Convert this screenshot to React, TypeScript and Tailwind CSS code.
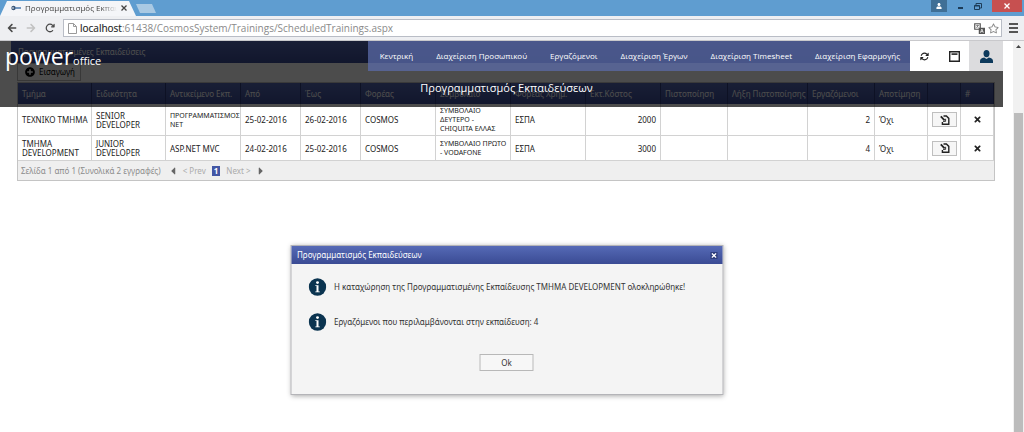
import type { ReactNode } from 'react';
import { FaArrowLeft, FaArrowRight, FaCaretLeft, FaCaretRight, FaPlusCircle, FaRegStar, FaTimes, FaUser } from 'react-icons/fa';
import { FaArrowRotateRight, FaArrowsRotate } from 'react-icons/fa6';

interface Training {
  department: string;
  specialty: string;
  subject: string;
  from: string;
  to: string;
  agency: string;
  contract: string;
  funding: string;
  cost: number;
  employees: number;
}

const menuItems = [
  'Κεντρική',
  'Διαχείριση Προσωπικού',
  'Εργαζόμενοι',
  'Διαχείριση Έργων',
  'Διαχείριση Timesheet',
  'Διαχείριση Εφαρμογής',
];

const columns = [
  { label: 'Τμήμα', width: 'w-[74px]' },
  { label: 'Ειδικότητα', width: 'w-[74px]' },
  { label: 'Αντικείμενο Εκπ.', width: 'w-[75px]' },
  { label: 'Από', width: 'w-[60px]' },
  { label: 'Έως', width: 'w-[60px]' },
  { label: 'Φορέας', width: 'w-[75px]' },
  { label: 'Συμβόλαιο', width: 'w-[75px]' },
  { label: 'Φορέας Χρημ.', width: 'w-[75px]' },
  { label: 'Εκτ.Κόστος', width: 'w-[75px]' },
  { label: 'Πιστοποίηση', width: 'w-[67px]' },
  { label: 'Λήξη Πιστοποίησης', width: 'w-[80px]' },
  { label: 'Εργαζόμενοι', width: 'w-[67px]' },
  { label: 'Αποτίμηση', width: 'w-[53px]' },
  { label: '', width: 'w-[33px]' },
  { label: '#', width: 'w-[33px]' },
];

const trainings: Training[] = [
  {
    department: 'ΤΕΧΝΙΚΟ ΤΜΗΜΑ',
    specialty: 'SENIOR DEVELOPER',
    subject: 'ΠΡΟΓΡΑΜΜΑΤΙΣΜΟΣ NET',
    from: '25-02-2016',
    to: '26-02-2016',
    agency: 'COSMOS',
    contract: 'ΣΥΜΒΟΛΑΙΟ ΔΕΥΤΕΡΟ - CHIQUITA ΕΛΛΑΣ',
    funding: 'ΕΣΠΑ',
    cost: 2000,
    employees: 2,
  },
  {
    department: 'ΤΜΗΜΑ DEVELOPMENT',
    specialty: 'JUNIOR DEVELOPER',
    subject: 'ASP.NET MVC',
    from: '24-02-2016',
    to: '25-02-2016',
    agency: 'COSMOS',
    contract: 'ΣΥΜΒΟΛΑΙΟ ΠΡΩΤΟ - VODAFONE',
    funding: 'ΕΣΠΑ',
    cost: 3000,
    employees: 4,
  },
];

const KeyIcon = () => (
  <svg viewBox="0 0 10 6" className="h-[6px] w-[10px] shrink-0">
    <circle cx="2.5" cy="3" r="2.2" fill="#3d5878" />
    <path d="M4 3h6" stroke="#4d79ad" strokeWidth="1.4" />
    <circle cx="2" cy="3" r=".8" fill="#fff" />
  </svg>
);

const PageIcon = () => (
  <svg viewBox="0 0 9 11" className="h-[11px] w-[9px] shrink-0" fill="#fff" stroke="#9a9a9a">
    <path d="M.5.5h5l3 3v7h-8zM5.5.5v3h3" />
  </svg>
);

const TranslateIcon = () => (
  <svg viewBox="0 0 12 12" className="size-[11px]">
    <path d="M.8.8h6v6h-6z" fill="#fff" stroke="#555" strokeWidth="1.3" />
    <path d="M2.3 2.6h3M3.8 2v.8M2.5 5.2l2.5-2.5M3 3.5l2 1.8" stroke="#555" strokeWidth=".7" />
    <path d="M5.2 5.2H12V12H5.2z" fill="#555" />
    <path d="M7 10.6l1.6-4 1.6 4M7.6 9.4h2" stroke="#fff" strokeWidth=".8" fill="none" />
  </svg>
);

const WindowIcon = () => (
  <svg viewBox="0 0 11 11" className="size-[11px]">
    <path d="M.7.7h9.6v9.6H.7z" fill="#fff" stroke="#222" strokeWidth="1.4" />
    <path d="M2.5 3.1h6" stroke="#222" strokeWidth="1.6" />
  </svg>
);

const UserIcon = () => (
  <svg viewBox="0 0 13 13" className="size-[13px]" fill="#0d3a5c">
    <ellipse cx="6.5" cy="3.6" rx="3" ry="3.6" />
    <path d="M0 13V11c0-2 1.4-3 4.2-3.6L6.5 9l2.3-1.6C11.6 8 13 9 13 11v2z" />
  </svg>
);

const EditIcon = () => (
  <svg viewBox="0 0 10 10" className="size-[10px]" fill="none" stroke="#222">
    <path d="M3.5 1H6.4L8.8 3.4V9.2H2.4V7" strokeWidth="1.4" />
    <path d="M.8 1.400l3.800 4" strokeWidth="1.8" />
    <path d="M5.600 3.800v2.600H3" strokeWidth=".9" />
  </svg>
);

const InfoIcon = () => (
  <svg viewBox="0 0 18 18" className="size-[18px] shrink-0">
    <circle cx="9" cy="9" r="8.7" fill="#0b3450" />
    <circle cx="9" cy="4.6" r="1.4" fill="#fff" />
    <path d="M6.8 7.2H10v6.2h1.3v.9H6.8v-.9H8V8.1H6.8z" fill="#fff" />
  </svg>
);

const BrowserBar = () => (
  <header className="font-['Open_Sans',sans-serif]">
    <div className="flex h-4 items-start justify-between bg-[#5f9dd0]">
      <div className="flex h-full">
        <div className="flex h-full w-[136px] items-center gap-1 bg-[#f4f5f8] pl-[11px] text-[#444] [clip-path:polygon(0_100%,7px_1px,129px_1px,100%_100%)]">
          <KeyIcon />
          <span className="w-[92px] overflow-hidden text-[8px] leading-4 whitespace-nowrap [mask-image:linear-gradient(to_right,black_82%,transparent)]">
            Προγραμματισμός Εκπαιδεύσεων
          </span>
          <button aria-label="Κλείσιμο καρτέλας">
            <svg viewBox="0 0 6 6" className="size-[6px]" stroke="#444" strokeWidth="1.3">
              <path d="M.5.5l5 5M5.5.5l-5 5" />
            </svg>
          </button>
        </div>
        <button
          aria-label="Νέα καρτέλα"
          className="mt-1 h-[9px] w-[20px] bg-[#a9c9e3] [clip-path:polygon(0_0,80%_0,100%_100%,20%_100%)]"
        />
      </div>
      <div className="flex items-start pr-[2px]">
        <button aria-label="Προφίλ" className="flex h-3 w-4 items-center justify-center bg-[#3f6f96] text-white">
          <FaUser size={6} />
        </button>
        <button aria-label="Ελαχιστοποίηση" className="ml-[9px] flex h-[9px] w-[9px] items-end justify-center">
          <span className="h-[2px] w-[5px] bg-[#1d3c58]" />
        </button>
        <button aria-label="Επαναφορά" className="ml-[9px] flex h-3 w-[9px] items-center">
          <svg viewBox="0 0 8 7" className="h-[7px] w-[8px]" fill="none" stroke="#1d3c58">
            <path d="M.5 2.5h5v4h-5zM2 2V.5h5.5V5H6" />
            <path d="M.5 3h5" />
          </svg>
        </button>
        <button aria-label="Κλείσιμο" className="ml-[9px] flex h-3 w-[30px] items-center justify-center bg-[#c75050]">
          <svg viewBox="0 0 6 6" className="size-[6px]" stroke="#fff" strokeWidth="1.3">
            <path d="M.5.5l5 5M5.5.5l-5 5" />
          </svg>
        </button>
      </div>
    </div>
    <div className="flex h-[25px] items-center border-b border-[#c9c9cc] bg-[#eeeff2] pr-[6px] pl-[7px] text-[#4a4a4a]">
      <button aria-label="Πίσω"><FaArrowLeft size={10} /></button>
      <button aria-label="Μπροστά" className="ml-[9px] text-[#c2c2c2]"><FaArrowRight size={10} /></button>
      <button aria-label="Ανανέωση" className="ml-[9px]"><FaArrowRotateRight size={10} /></button>
      <div className="ml-2 flex h-[18px] flex-1 items-center border border-[#b9bdc6] bg-white pr-[2px] pl-1">
        <PageIcon />
        <div className="relative ml-[3px] flex-1 text-[10px] leading-4">
          <input
            aria-label="Διεύθυνση"
            className="block w-full text-[#8a8a8a] outline-none"
            defaultValue="localhost:61438/CosmosSystem/Trainings/ScheduledTrainings.aspx"
          />
          <span aria-hidden="true" className="pointer-events-none absolute top-0 left-0 text-[#333]">localhost</span>
        </div>
        <TranslateIcon />
        <FaRegStar size={11} className="ml-[3px] text-[#888]" />
      </div>
      <button aria-label="Μενού" className="ml-[7px] flex w-[9px] flex-col gap-[2px]">
        <span className="h-[2px] bg-[#555]" />
        <span className="h-[2px] bg-[#555]" />
        <span className="h-[2px] bg-[#555]" />
      </button>
    </div>
  </header>
);

const SiteHeader = () => (
  <div className="absolute inset-x-0 top-0 z-10 h-[66px] bg-black/70 font-['Open_Sans',sans-serif] text-white">
    <div className="flex items-start justify-between">
      <a href="#" className="flex items-baseline pl-[5px] leading-[31px]">
        <span className="text-[23px] font-medium">power</span>
        <span className="text-[11px]">office</span>
      </a>
      <div className="flex h-[30px]">
        <nav className="flex items-center gap-[23px] bg-[#5b6ba8]/75 pr-[10px] pl-3 text-[8px] font-medium whitespace-nowrap">
          {menuItems.map(item => (
            <a key={item} href="#">{item}</a>
          ))}
        </nav>
        <button aria-label="Ανανέωση" className="flex w-[29px] items-center justify-center bg-white text-[#222]">
          <FaArrowsRotate size={9} />
        </button>
        <button aria-label="Παράθυρο" className="flex w-[30px] items-center justify-center bg-white">
          <WindowIcon />
        </button>
        <button aria-label="Χρήστης" className="flex w-[34px] items-center justify-center bg-[#dcdcde]">
          <UserIcon />
        </button>
      </div>
    </div>
    <h1 className="pt-1 pl-[10px] text-center text-[11px] leading-4">Προγραμματισμός Εκπαιδεύσεων</h1>
  </div>
);

interface CellProps {
  children?: ReactNode;
  className?: string;
}

const Cell = ({ children, className = '' }: CellProps) => (
  <td className={`overflow-hidden border-r border-b border-[#d2d2d2] pl-1 leading-[9px] ${className}`}>{children}</td>
);

const TrainingsGrid = () => (
  <section className="border border-[#c4c4c4] text-[8px] text-[#222]">
    <table className="w-full table-fixed border-separate border-spacing-0">
      <colgroup>
        {columns.map(col => (
          <col key={col.label} className={col.width} />
        ))}
      </colgroup>
      <thead>
        <tr className="h-[21px] bg-linear-to-b from-[#5568b4] to-[#3b4c96] text-left text-white">
          {columns.map(col => (
            <th key={col.label} className="border-r border-[#2c3a7a] pl-1 font-normal whitespace-nowrap">
              {col.label}
            </th>
          ))}
        </tr>
      </thead>
      <tbody>
        {trainings.map((row, i) => (
          <tr key={row.department} className={i === 0 ? 'h-8' : 'h-[25px]'}>
            <Cell>{row.department}</Cell>
            <Cell>{row.specialty}</Cell>
            <Cell className={row.subject.length > 15 ? 'text-[7px]' : ''}>{row.subject}</Cell>
            <Cell>{row.from}</Cell>
            <Cell>{row.to}</Cell>
            <Cell>{row.agency}</Cell>
            <Cell className="pr-[3px] text-[7px]">{row.contract}</Cell>
            <Cell>{row.funding}</Cell>
            <Cell className="pr-1 text-right">{row.cost}</Cell>
            <Cell />
            <Cell />
            <Cell className="pr-1 text-right">{row.employees}</Cell>
            <Cell>Όχι</Cell>
            <Cell>
              <button aria-label="Επεξεργασία" className="flex h-[15px] w-[25px] items-center justify-center border border-[#bfbfbf] bg-[#f6f6f6]">
                <EditIcon />
              </button>
            </Cell>
            <Cell>
              <button aria-label="Διαγραφή" className="ml-2 block"><FaTimes size={9} /></button>
            </Cell>
          </tr>
        ))}
      </tbody>
    </table>
    <div className="flex h-[19px] items-center bg-[#efefef] pl-[3px] text-[#8c8c8c]">
      <span>Σελίδα 1 από 1 (Συνολικά 2 εγγραφές)</span>
      <FaCaretLeft size={12} className="ml-[6px] text-[#666]" />
      <span className="ml-1 text-[#ababab]">&lt; Prev</span>
      <span className="mx-[6px] bg-[#4357a5] px-[2px] leading-[10px] font-bold text-white">1</span>
      <span className="text-[#ababab]">Next &gt;</span>
      <FaCaretRight size={12} className="ml-1 text-[#666]" />
    </div>
  </section>
);

const messages = [
  'Η καταχώρηση της Προγραμματισμένης Εκπαίδευσης ΤΜΗΜΑ DEVELOPMENT ολοκληρώθηκε!',
  'Εργαζόμενοι που περιλαμβάνονται στην εκπαίδευση: 4',
];

const ResultDialog = () => (
  <div
    role="dialog"
    aria-labelledby="dialog-title"
    className="absolute top-[204px] left-1/2 z-20 w-[433px] -translate-x-1/2 border border-[#b4b4b8] bg-[#f4f4f4] shadow-[0_1px_5px_rgba(0,0,0,0.35)]"
  >
    <div className="flex h-[18px] items-center justify-between bg-linear-to-b from-[#566ab6] to-[#3a4b94] pr-[5px] pl-[6px] text-white">
      <h2 id="dialog-title" className="text-[8px]">Προγραμματισμός Εκπαιδεύσεων</h2>
      <button aria-label="Κλείσιμο" className="flex size-[7px] items-center justify-center bg-[#2e3d7c]">
        <FaTimes size={7} />
      </button>
    </div>
    <div className="flex flex-col items-center px-[17px] pt-[14px] pb-[23px] text-[#333]">
      <div className="flex w-full flex-col gap-[17px]">
        {messages.map(message => (
          <p key={message} className="flex items-center gap-2 text-[8px] leading-[18px] whitespace-nowrap">
            <InfoIcon />
            {message}
          </p>
        ))}
      </div>
      <button className="mt-[23px] h-[17px] w-[54px] border border-[#b8b8b8] bg-[#f7f7f7] text-[8px]">Ok</button>
    </div>
  </div>
);

const Scrollbar = () => (
  <div className="flex shrink-0 flex-col items-center bg-[#f1f1f1] px-[1px] pt-1">
    <svg viewBox="0 0 5 3" className="h-[3px] w-[5px]" fill="#444">
      <path d="M0 3l2.5-3L5 3z" />
    </svg>
    <div className="mt-[65px] w-[9px] flex-1 bg-[#bcbcbc]" />
  </div>
);

export default function App() {
  return (
    <div className="flex min-h-screen flex-col bg-white font-['Noto_Sans',sans-serif]">
      <BrowserBar />
      <div className="flex flex-1">
        <main className="relative min-w-0 flex-1 pr-[10px]">
          <div className="relative">
            <SiteHeader />
            <h2 className="ml-[11px] h-[22px] bg-linear-to-b from-[#5568b4] to-[#3b4c96] pl-[7px] text-[8px] leading-[22px] text-white">
              Προγραμματισμένες Εκπαιδεύσεις
            </h2>
            <div className="pr-2 pl-[17px]">
              <button className="flex h-[18px] w-16 items-center gap-1 border border-[#bbb] pl-[7px] text-[8px]">
                <FaPlusCircle size={10} className="shrink-0" />
                Εισαγωγή
              </button>
              <div className="pt-[1px]">
                <TrainingsGrid />
              </div>
            </div>
          </div>
          <ResultDialog />
        </main>
        <Scrollbar />
      </div>
    </div>
  );
}
